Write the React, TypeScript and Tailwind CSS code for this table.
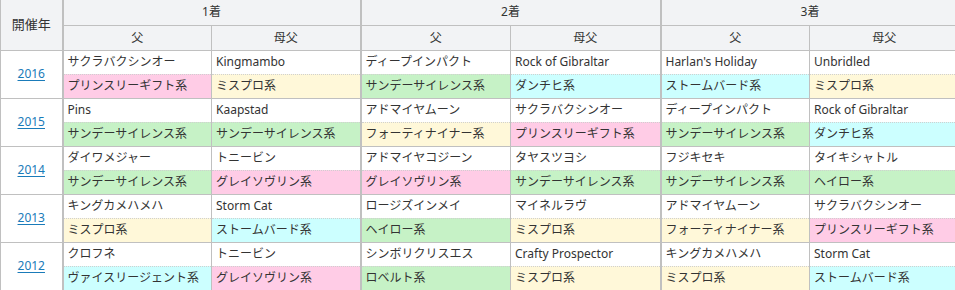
import React from 'react'

type Tone = 'pink' | 'yellow' | 'green' | 'cyan'

interface Horse {
  name: string
  line: string
  tone: Tone
}

interface Year {
  year: string
  horses: Horse[]
}

const toneBg: Record<Tone, string> = {
  pink: 'bg-[#ffcce6]',
  yellow: 'bg-[#fff8d9]',
  green: 'bg-[#c6f2c6]',
  cyan: 'bg-[#ccffff]',
}

const h = (name: string, line: string, tone: Tone): Horse => ({ name, line, tone })

const years: Year[] = [
  {
    year: '2016',
    horses: [
      h('サクラバクシンオー', 'プリンスリーギフト系', 'pink'),
      h('Kingmambo', 'ミスプロ系', 'yellow'),
      h('ディープインパクト', 'サンデーサイレンス系', 'green'),
      h('Rock of Gibraltar', 'ダンチヒ系', 'cyan'),
      h("Harlan's Holiday", 'ストームバード系', 'cyan'),
      h('Unbridled', 'ミスプロ系', 'yellow'),
    ],
  },
  {
    year: '2015',
    horses: [
      h('Pins', 'サンデーサイレンス系', 'green'),
      h('Kaapstad', 'サンデーサイレンス系', 'green'),
      h('アドマイヤムーン', 'フォーティナイナー系', 'yellow'),
      h('サクラバクシンオー', 'プリンスリーギフト系', 'pink'),
      h('ディープインパクト', 'サンデーサイレンス系', 'green'),
      h('Rock of Gibraltar', 'ダンチヒ系', 'cyan'),
    ],
  },
  {
    year: '2014',
    horses: [
      h('ダイワメジャー', 'サンデーサイレンス系', 'green'),
      h('トニービン', 'グレイソヴリン系', 'pink'),
      h('アドマイヤコジーン', 'グレイソヴリン系', 'pink'),
      h('タヤスツヨシ', 'サンデーサイレンス系', 'green'),
      h('フジキセキ', 'サンデーサイレンス系', 'green'),
      h('タイキシャトル', 'ヘイロー系', 'green'),
    ],
  },
  {
    year: '2013',
    horses: [
      h('キングカメハメハ', 'ミスプロ系', 'yellow'),
      h('Storm Cat', 'ストームバード系', 'cyan'),
      h('ロージズインメイ', 'ヘイロー系', 'green'),
      h('マイネルラヴ', 'ミスプロ系', 'yellow'),
      h('アドマイヤムーン', 'フォーティナイナー系', 'yellow'),
      h('サクラバクシンオー', 'プリンスリーギフト系', 'pink'),
    ],
  },
  {
    year: '2012',
    horses: [
      h('クロフネ', 'ヴァイスリージェント系', 'cyan'),
      h('トニービン', 'グレイソヴリン系', 'pink'),
      h('シンボリクリスエス', 'ロベルト系', 'green'),
      h('Crafty Prospector', 'ミスプロ系', 'yellow'),
      h('キングカメハメハ', 'ミスプロ系', 'yellow'),
      h('Storm Cat', 'ストームバード系', 'cyan'),
    ],
  },
]

// thick separator before each 父 column (year/1着, 1着/2着, 2着/3着)
const leftEdge = (i: number) =>
  i % 2 === 0 ? 'border-l-2 border-l-[#c0c0c0]' : 'border-l border-l-[#c0c0c0]'

export default function App() {
  return (
    <div className="w-[955px] h-[290px] overflow-hidden bg-white">
      <table
        className="table-fixed border-collapse w-[958px] text-[12px] leading-none text-[#333]"
        style={{ fontFamily: '"Noto Sans", "Noto Sans CJK JP", sans-serif' }}
      >
        <colgroup>
          <col className="w-[62px]" />
          <col className="w-[149px]" />
          <col className="w-[149px]" />
          <col className="w-[150px]" />
          <col className="w-[150px]" />
          <col className="w-[149px]" />
          <col className="w-[149px]" />
        </colgroup>
        <thead>
          <tr className="h-[25px] bg-[#f2f3f5]">
            <th
              rowSpan={2}
              className="border-x border-b border-[#c0c0c0] font-normal text-[13px] text-center align-middle"
            >
              開催年
            </th>
            {['1着', '2着', '3着'].map((p) => (
              <th
                key={p}
                colSpan={2}
                className="border-b border-b-[#c0c0c0] border-l-2 border-l-[#c0c0c0] font-normal text-center align-middle"
              >
                {p}
              </th>
            ))}
          </tr>
          <tr className="h-[25px] bg-[#f2f3f5]">
            {[0, 1, 2, 3, 4, 5].map((i) => (
              <th
                key={i}
                className={`border-b border-b-[#c0c0c0] ${leftEdge(i)} font-normal text-center align-middle`}
              >
                {i % 2 === 0 ? '父' : '母父'}
              </th>
            ))}
          </tr>
        </thead>
        <tbody>
          {years.map((y) => (
            <React.Fragment key={y.year}>
              <tr className="h-[24px]">
                <td
                  rowSpan={2}
                  className="border border-[#c0c0c0] text-center align-middle"
                >
                  <a href="#" className="text-[#1a7bb9] underline underline-offset-2">
                    {y.year}
                  </a>
                </td>
                {y.horses.map((hs, i) => (
                  <td key={i} className={`${leftEdge(i)} px-1 align-middle whitespace-nowrap`}>
                    {hs.name}
                  </td>
                ))}
              </tr>
              <tr className="h-[24px]">
                {y.horses.map((hs, i) => (
                  <td
                    key={i}
                    className={`${leftEdge(i)} border-t border-t-[#d0d0d0] [border-top-style:dotted] border-b border-b-[#c0c0c0] px-1 align-middle whitespace-nowrap ${toneBg[hs.tone]}`}
                  >
                    {hs.line}
                  </td>
                ))}
              </tr>
            </React.Fragment>
          ))}
        </tbody>
      </table>
    </div>
  )
}
